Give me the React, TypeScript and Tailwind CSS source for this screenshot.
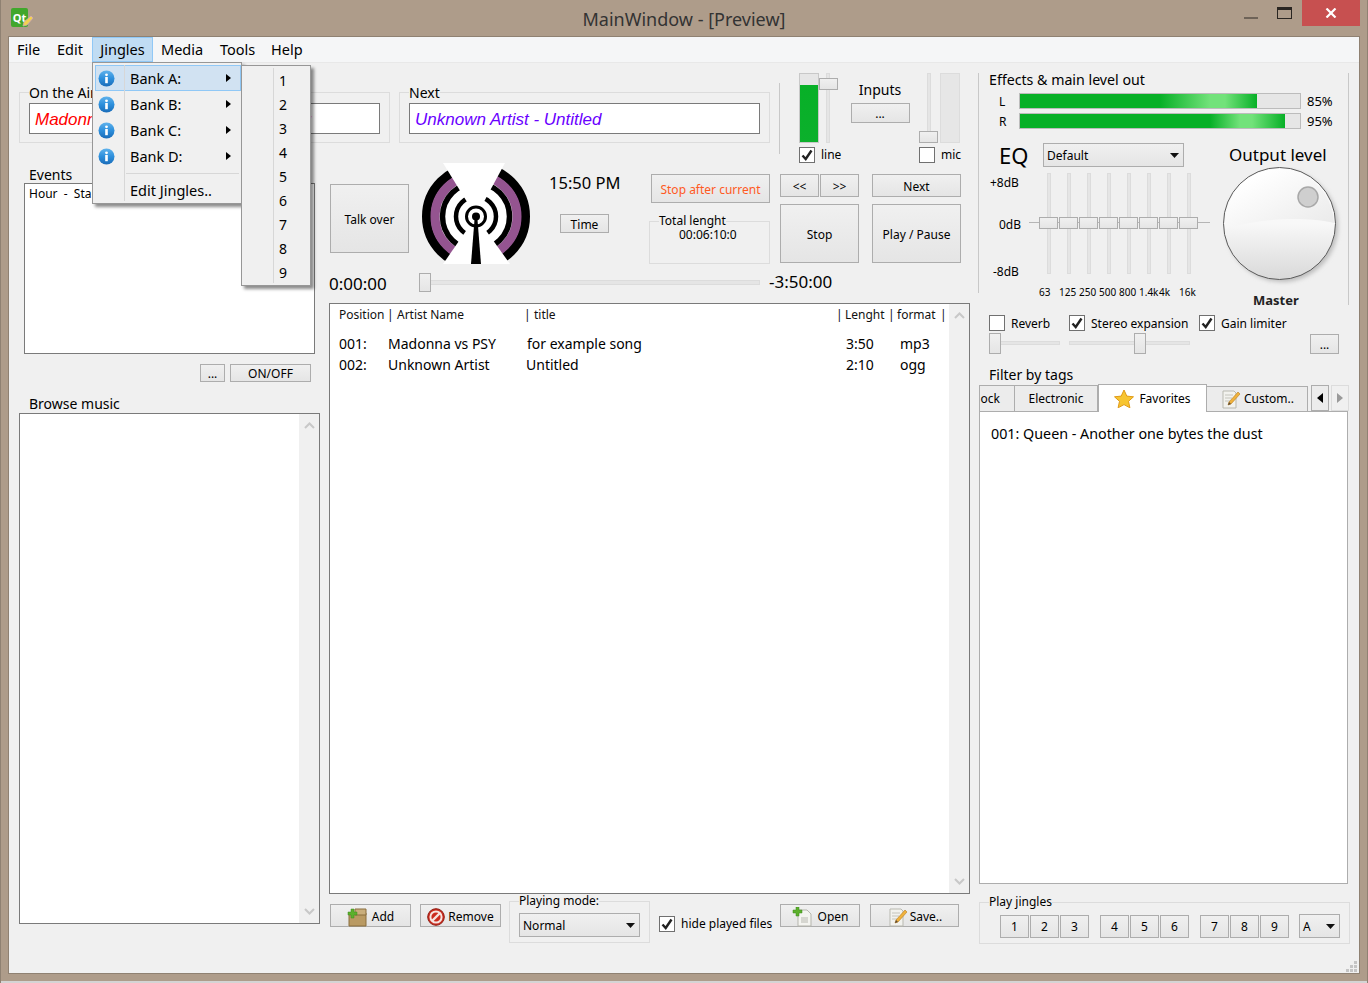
import React from "react";

type P = { className?: string; children?: React.ReactNode };

const Btn = ({ className = "", low = false, children }: P & { low?: boolean }) => (
  <div className={`flex items-center justify-center shrink-0 border border-[#adadad] bg-gradient-to-b from-[#f0f0f0] to-[#e5e5e5] text-[12px] ${low ? "pt-[3px]" : "pt-[1px]"} ${className}`}>
    {children}
  </div>
);

const Group = ({ title, className = "", titleClass = "text-[14px] leading-[16px]", children }: P & { title: string; titleClass?: string }) => (
  <div className={`shrink-0 border border-[#dcdcdc] ${className}`}>
    <div className={`-mt-[8px] ml-[9px] h-[16px] w-fit bg-[#f0f0f0] text-black ${titleClass}`}>{title}</div>
    {children}
  </div>
);

const Arrow = ({ className = "" }: P) => (
  <svg width="9" height="5" viewBox="0 0 9 5" className={`shrink-0 ${className}`}>
    <path d="M0 0h9L4.5 5z" fill="#111" />
  </svg>
);

const Combo = ({ className = "", children }: P) => (
  <div className={`flex items-center justify-between border border-[#adadad] bg-gradient-to-b from-[#f0f0f0] to-[#e5e5e5] pl-[3px] pr-[4px] text-[12px] text-black ${className}`}>
    <span className="pt-[1px]">{children}</span>
    <Arrow />
  </div>
);

const Check = ({ on = false, className = "" }: { on?: boolean; className?: string }) => (
  <div className={`flex h-[16px] w-[16px] shrink-0 items-center justify-center border border-[#707070] bg-white ${className}`}>
    {on && (
      <svg width="12" height="12" viewBox="0 0 12 12">
        <path d="M1.5 6.5 L4.7 10 L10.5 1.5" fill="none" stroke="#222" strokeWidth="2.4" />
      </svg>
    )}
  </div>
);

const InfoIcon = () => (
  <svg width="17" height="17" viewBox="0 0 17 17">
    <defs>
      <linearGradient id="ig" x1="0" y1="0" x2="0" y2="1">
        <stop offset="0" stopColor="#5fb2ec" />
        <stop offset="0.5" stopColor="#2d8fdc" />
        <stop offset="1" stopColor="#1a6cb8" />
      </linearGradient>
    </defs>
    <circle cx="8.5" cy="8.5" r="8" fill="url(#ig)" />
    <circle cx="8.5" cy="4.8" r="1.4" fill="#fff" />
    <rect x="7.2" y="7" width="2.6" height="6.2" fill="#fff" />
  </svg>
);

const PencilNote = () => (
  <svg width="22" height="20" viewBox="0 0 22 20">
    <path d="M3 2h11l2 2v15H3z" fill="#f2f2ee" stroke="#b9b9b0" />
    <path d="M5 6h8M5 9h7M5 12h5" stroke="#c4c4bc" />
    <path d="M8 16l1-3 9-10 2 2-9 10z" fill="#f0b23c" stroke="#b67c20" strokeWidth="0.6" />
    <path d="M8 16l1-3 2 2z" fill="#5a4a3a" />
  </svg>
);

const AddBox = () => (
  <svg width="22" height="20" viewBox="0 0 22 20">
    <path d="M2 6h17v13H2z" fill="#b99a63" stroke="#8a6e3f" />
    <path d="M8 2h11v6H8z" fill="#c9ae7c" stroke="#8a6e3f" />
    <path d="M4 2h3v3h3v3H7v3H4V8H1V5h3z" fill="#5cb02c" stroke="#3f8a1c" strokeWidth="0.5" />
  </svg>
);

const OpenDoc = () => (
  <svg width="22" height="20" viewBox="0 0 22 20">
    <path d="M6 3h9l4 4v12H6z" fill="#f4f4f0" stroke="#b5b5ad" />
    <path d="M9 11h7M9 13h7M9 15h7" stroke="#b8b8b0" />
    <path d="M4 0h3v3h3v3H7v3H4V6H1V3h3z" fill="#5cb02c" stroke="#3f8a1c" strokeWidth="0.5" />
  </svg>
);

const RemoveIcon = () => (
  <svg width="18" height="18" viewBox="0 0 18 18">
    <circle cx="9" cy="9" r="8.3" fill="#cc2b1e" stroke="#8e1c12" />
    <circle cx="9" cy="9" r="5.6" fill="none" stroke="#f6e4e0" strokeWidth="2" />
    <path d="M5 13L13 5" stroke="#f6e4e0" strokeWidth="2.4" />
  </svg>
);

const StarIcon = () => (
  <svg width="20" height="19" viewBox="0 0 20 19">
    <path d="M10 1l2.8 6.1 6.7.7-5 4.5 1.4 6.5L10 15.6 4.1 18.8l1.4-6.5-5-4.5 6.7-.7z" fill="#f7c531" stroke="#e09a18" />
  </svg>
);

const Logo = () => (
  <svg width="110" height="101" viewBox="0 0 110 101" className="shrink-0">
    <circle cx="55" cy="53.5" r="36" fill="#fff" />
    <circle cx="55" cy="53.5" r="49.5" fill="none" stroke="#000" strokeWidth="9" />
    <circle cx="55" cy="53.5" r="41" fill="none" stroke="#945490" strokeWidth="9" />
    <circle cx="55" cy="53.5" r="33.5" fill="none" stroke="#000" strokeWidth="5.5" />
    <circle cx="55" cy="53.5" r="20" fill="none" stroke="#000" strokeWidth="4.5" />
    <path d="M22 0H84L55 53.5z" fill="#fff" />
    <path d="M22 101H89L55 53.5z" fill="#fff" />
    <circle cx="55" cy="53.5" r="9.5" fill="#fff" stroke="#000" strokeWidth="3" />
    <path d="M53.8 53H56.2L60 101H50z" fill="#000" />
    <circle cx="55" cy="53.5" r="4" fill="#000" />
  </svg>
);

const Knob = () => (
  <svg width="120" height="120" viewBox="0 0 120 120" className="shrink-0">
    <defs>
      <linearGradient id="kb" x1="0" y1="0" x2="0" y2="1">
        <stop offset="0" stopColor="#fafafa" />
        <stop offset="0.5" stopColor="#f8f8f8" />
        <stop offset="1" stopColor="#d9d9d9" />
      </linearGradient>
      <linearGradient id="kt" x1="0" y1="0" x2="1" y2="1">
        <stop offset="0.2" stopColor="#ffffff" />
        <stop offset="1" stopColor="#e9e9e9" />
      </linearGradient>
      <filter id="ks" x="-10%" y="-10%" width="120%" height="120%">
        <feGaussianBlur stdDeviation="2" />
      </filter>
    </defs>
    <circle cx="59" cy="59" r="56" fill="#bdbdbd" filter="url(#ks)" />
    <circle cx="56.5" cy="56.5" r="56" fill="url(#kb)" stroke="#5a5a5a" />
    <path d="M2 62 C 2 20, 30 2, 56 2 C 85 2, 110 25, 111 56 C 85 50, 40 50, 2 62z" fill="url(#kt)" />
    <circle cx="85" cy="30" r="10" fill="#cfcfcf" stroke="#a8a8a8" strokeWidth="1.5" />
  </svg>
);

const Groove = ({ className = "" }: P) => <div className={`border border-[#dcdcdc] bg-[#e5e5e5] ${className}`} />;

const Handle = ({ className = "" }: P) => (
  <div className={`absolute border border-[#adadad] bg-gradient-to-b from-[#f0f0f0] to-[#e5e5e5] ${className}`} />
);

const ScrollBar = ({ className = "" }: P) => (
  <div className={`flex shrink-0 flex-col items-center justify-between bg-[#f0f0f0] py-[8px] ${className}`}>
    <svg width="11" height="7" viewBox="0 0 11 7">
      <path d="M1 6L5.5 1.5 10 6" fill="none" stroke="#c8c8c8" strokeWidth="2" />
    </svg>
    <svg width="11" height="7" viewBox="0 0 11 7">
      <path d="M1 1L5.5 5.5 10 1" fill="none" stroke="#c8c8c8" strokeWidth="2" />
    </svg>
  </div>
);

const Meter = ({ label, value, fill }: { label: string; value: string; fill: string }) => (
  <div className="flex h-[16px] items-center text-[12px] text-black">
    <span className="ml-[20px] w-[20px] pt-[1px]">{label}</span>
    <div className="h-[16px] w-[282px] border border-[#bcbcbc] bg-[#e6e6e6]">
      <div className={`h-full ${fill}`} />
    </div>
    <span className="ml-[6px] pt-[1px] text-[13px]">{value}</span>
  </div>
);

const bands = ["63", "125", "250", "500", "800", "1.4k", "4k", "16k"];

export default function App() {
  return (
    <div className="flex h-[983px] w-[1368px] flex-col overflow-hidden border-x border-[#8f8172] bg-[#ae9c8a] font-['Noto_Sans',sans-serif] text-black">
      {/* title bar */}
      <div className="grid h-[36px] shrink-0 grid-cols-[1fr_auto_1fr]">
        <div className="pl-[10px] pt-[8px]">
          <div className="relative flex h-[19px] w-[17px] items-center justify-center rounded-[2px] bg-[#41a72c] text-[11px] font-bold leading-none text-white">
            Qt
            <svg width="12" height="12" viewBox="0 0 12 12" className="absolute -right-[6px] bottom-0">
              <path d="M1 11l1-4 7-6 2 2-6 7z" fill="#f3d24e" stroke="#d2a8b8" strokeWidth="0.8" />
            </svg>
          </div>
        </div>
        <div className="pt-[6px] text-[18px] leading-[26px] text-[#333]">MainWindow - [Preview]</div>
        <div className="flex justify-end pr-[7px]">
          <div className="mr-[19px] mt-[17px] h-[2px] w-[14px] bg-[#6e6358]" />
          <div className="mr-[10px] mt-[7px] h-[12px] w-[15px] border border-t-[3px] border-[#2a2622]" />
          <div className="flex h-[26px] w-[58px] items-center justify-center bg-[#c75050]">
            <svg width="12" height="10" viewBox="0 0 12 10">
              <path d="M1.5 0.5L10.5 9.5M10.5 0.5L1.5 9.5" stroke="#fff" strokeWidth="2.2" />
            </svg>
          </div>
        </div>
      </div>

      {/* window body */}
      <div className="relative ml-[7px] flex h-[938px] w-[1352px] shrink-0 flex-col border border-[#8f8172] bg-[#f0f0f0]">
        <div className="flex h-[26px] shrink-0 items-stretch border-b border-[#e8e8e8] bg-[#f5f6f7] pl-[8px] text-[14.5px]">
          <div className="flex w-[40px] items-center">File</div>
          <div className="flex w-[35px] items-center">Edit</div>
          <div className="flex w-[61px] items-center justify-center border border-[#90c8f6] bg-[#c0dcf3]">Jingles</div>
          <div className="ml-[8px] flex w-[59px] items-center">Media</div>
          <div className="flex w-[51px] items-center">Tools</div>
          <div className="flex items-center">Help</div>
        </div>

        <div className="flex min-h-0 flex-1">
          {/* left and middle */}
          <div className="flex w-[966px] shrink-0 flex-col">
            <div className="flex h-[100px] shrink-0">
              <Group title="On the Air" className="ml-[10px] mt-[29px] h-[51px] w-[371px]">
                <div className="ml-[9px] mt-[2px] flex h-[31px] w-[351px] items-center border border-[#7a7a7a] bg-white pl-[5px] pt-[2px] font-['Liberation_Sans',sans-serif] text-[17px] italic text-[#ff0000]">
                  Madonna vs PSY - for example song
                </div>
              </Group>
              <Group title="Next" className="ml-[9px] mt-[29px] h-[51px] w-[371px]">
                <div className="ml-[9px] mt-[2px] flex h-[31px] w-[351px] items-center border border-[#7a7a7a] bg-white pl-[5px] pt-[2px] font-['Liberation_Sans',sans-serif] text-[17px] italic text-[#6a00ff]">
                  Unknown Artist - Untitled
                </div>
              </Group>
              <div className="ml-[9px] mt-[20px] h-[71px] w-px shrink-0 bg-[#c8c8c8]" />
              {/* inputs */}
              <div className="ml-[19px] mt-[10px] flex h-[90px] flex-col">
                <div className="flex">
                  <div className="h-[70px] w-[20px] border border-[#c8c8c8] bg-[#e6e6e6] pt-[11px]">
                    <div className="h-full bg-gradient-to-b from-[#07b027] to-[#0cb02c]" />
                  </div>
                  <div className="relative ml-[7px] h-[70px] w-[12px]">
                    <Groove className="h-full w-[4px]" />
                    <Handle className="-left-[7px] top-[5px] h-[12px] w-[19px]" />
                  </div>
                  <div className="ml-[7px] flex w-[70px] flex-col items-center pt-[8px]">
                    <div className="text-[14px] leading-[18px]">Inputs</div>
                    <Btn className="mt-[4px] h-[20px] w-[59px]">...</Btn>
                  </div>
                  <div className="relative ml-[12px] h-[70px] w-[13px]">
                    <Groove className="h-full w-[4px]" />
                    <Handle className="-left-[8px] top-[58px] h-[12px] w-[19px]" />
                  </div>
                  <div className="h-[70px] w-[20px] border border-[#dcdcdc] bg-[#e6e6e6]" />
                </div>
                <div className="mt-[3px] flex items-center text-[12px]">
                  <Check on />
                  <span className="ml-[6px] w-[98px]">line</span>
                  <Check />
                  <span className="ml-[6px]">mic</span>
                </div>
              </div>
            </div>

            <div className="flex min-h-0 flex-1">
              {/* left column */}
              <div className="flex w-[316px] shrink-0 flex-col">
                <div className="ml-[20px] mt-[3px] h-[17px] text-[14px] leading-[17px]">Events</div>
                <div className="ml-[15px] h-[171px] w-[291px] border border-[#7a7a7a] bg-white pl-[4px] pt-[2px] text-[12px] leading-[16px]">
                  Hour&nbsp; -&nbsp; Start
                </div>
                <div className="mt-[10px] flex">
                  <Btn className="ml-[191px] h-[18px] w-[25px]">...</Btn>
                  <Btn className="ml-[5px] h-[18px] w-[81px]">ON/OFF</Btn>
                </div>
                <div className="ml-[20px] mt-[13px] h-[18px] text-[14px] leading-[17px]">Browse music</div>
                <div className="ml-[10px] flex h-[511px] w-[301px] justify-end border border-[#7a7a7a] bg-white">
                  <ScrollBar className="w-[20px]" />
                </div>
              </div>

              {/* middle column */}
              <div className="flex w-[650px] shrink-0 flex-col">
                <div className="flex h-[110px] shrink-0">
                  <Btn low className="ml-[5px] mt-[21px] h-[69px] w-[79px]">Talk over</Btn>
                  <div className="ml-[12px]">
                    <Logo />
                  </div>
                  <div className="ml-[18px] w-[99px]">
                    <div className="mt-[9px] text-[16.5px] leading-[22px]">15:50 PM</div>
                    <Btn low className="ml-[11px] mt-[20px] h-[19px] w-[49px]">Time</Btn>
                  </div>
                  <div className="ml-[1px] w-[122px]">
                    <Btn low className="ml-[2px] mt-[11px] h-[29px] w-[119px] text-[#ff5a1f]">Stop after current</Btn>
                    <Group title="Total lenght" className="mt-[18px] h-[43px] w-[121px]" titleClass="text-[12px] leading-[14px]">
                      <div className="ml-[29px] mt-[-2px] text-[12px] leading-[14px]">00:06:10:0</div>
                    </Group>
                  </div>
                  <div className="ml-[9px] w-[79px]">
                    <div className="mt-[11px] flex gap-px">
                      <Btn low className="h-[23px] w-[39px]">&lt;&lt;</Btn>
                      <Btn low className="h-[23px] w-[39px]">&gt;&gt;</Btn>
                    </div>
                    <Btn low className="mt-[7px] h-[59px] w-[79px]">Stop</Btn>
                  </div>
                  <div className="ml-[13px] w-[89px]">
                    <Btn low className="mt-[11px] h-[23px] w-[89px]">Next</Btn>
                    <Btn low className="mt-[7px] h-[59px] w-[89px]">Play / Pause</Btn>
                  </div>
                </div>

                <div className="flex h-[30px] shrink-0 items-start">
                  <div className="ml-[4px] mt-[1px] w-[90px] text-[17px] leading-[20px]">0:00:00</div>
                  <div className="relative h-[19px] w-[341px]">
                    <Groove className="absolute left-0 top-[7px] h-[5px] w-full" />
                    <Handle className="left-0 top-0 h-[19px] w-[12px]" />
                  </div>
                  <div className="ml-[9px] -mt-[1px] text-[17px] leading-[20px]">-3:50:00</div>
                </div>

                <div className="ml-[4px] flex h-[591px] w-[641px] shrink-0 border border-[#7a7a7a] bg-white">
                  <div className="min-w-0 flex-1 pl-[9px] pt-[2px]">
                    <div className="grid h-[18px] grid-cols-[48px_10px_127px_10px_302px_9px_43px_9px_43px_8px] items-center text-[12px] text-[#111]">
                      <span>Position</span><span>|</span><span>Artist Name</span><span>|</span><span>title</span>
                      <span>|</span><span>Lenght</span><span>|</span><span>format</span><span>|</span>
                    </div>
                    <div className="mt-[9px] grid grid-cols-[49px_139px_319px_54px_auto] text-[14px] leading-[21px]">
                      <span>001:</span><span>Madonna vs PSY</span><span>for example song</span><span>3:50</span><span>mp3</span>
                      <span>002:</span><span>Unknown Artist</span><span className="-ml-[1px]">Untitled</span><span>2:10</span><span>ogg</span>
                    </div>
                  </div>
                  <ScrollBar className="w-[20px]" />
                </div>

                <div className="flex items-start">
                  <Btn low className="ml-[5px] mt-[10px] h-[23px] w-[81px] gap-[3px]"><AddBox />Add</Btn>
                  <Btn low className="ml-[9px] mt-[10px] h-[23px] w-[81px] gap-[3px]"><RemoveIcon />Remove</Btn>
                  <Group title="Playing mode:" className="ml-[8px] mt-[7px] h-[42px] w-[141px]" titleClass="text-[12px] leading-[14px]">
                    <Combo className="ml-[9px] mt-[3px] h-[24px] w-[121px]">Normal</Combo>
                  </Group>
                  <Check on className="ml-[9px] mt-[22px]" />
                  <span className="ml-[6px] mt-[21px] w-[99px] text-[12px] leading-[18px]">hide played files</span>
                  <Btn low className="mt-[10px] h-[23px] w-[80px] gap-[4px]"><OpenDoc />Open</Btn>
                  <Btn low className="ml-[10px] mt-[10px] h-[23px] w-[89px] gap-[1px]"><PencilNote />Save..</Btn>
                </div>
              </div>
            </div>
          </div>

          {/* right column */}
          <div className="flex w-[384px] shrink-0 flex-col">
            <div className="ml-[3px] mt-[10px] h-[232px] w-[371px] shrink-0 border-r border-[#c8c8c8]">
              <div className="h-[220px] border-l border-[#c8c8c8]">
                <div className="ml-[10px] h-[14px] text-[14.2px] leading-[14px]">Effects &amp; main level out</div>
                <div className="mt-[6px] flex flex-col gap-[4px]">
                  <Meter label="L" value="85%" fill="w-[237px] bg-[linear-gradient(90deg,#07b027_0,#07b027_140px,#72e27a_190px,#72e27a_205px,#07b027_237px)]" />
                  <Meter label="R" value="95%" fill="w-[265px] bg-[linear-gradient(90deg,#07b027_0,#07b027_190px,#72e27a_220px,#72e27a_232px,#07b027_265px)]" />
                </div>
                <div className="mt-[14px] flex">
                  <div className="w-[244px]">
                    <div className="flex h-[24px] items-center">
                      <span className="ml-[20px] w-[44px] text-[22px] leading-[24px]">EQ</span>
                      <Combo className="h-[24px] w-[141px]">Default</Combo>
                    </div>
                    <div className="mt-[6px] flex">
                      <div className="relative h-[101px] w-[50px] text-[12px]">
                        <span className="absolute left-[11px] top-[1px]">+8dB</span>
                        <span className="absolute left-[20px] top-[43px]">0dB</span>
                        <span className="absolute left-[14px] top-[90px]">-8dB</span>
                      </div>
                      <div className="relative flex h-[101px] w-[181px] pl-[18px]">
                        <div className="absolute left-0 right-0 top-[49px] h-px bg-[#b5b5b5]" />
                        {bands.map((b) => (
                          <div key={b} className="relative h-full w-[20px]">
                            <Groove className="h-full w-[4px]" />
                            <Handle className="-left-[8px] top-[44px] h-[12px] w-[19px]" />
                          </div>
                        ))}
                      </div>
                    </div>
                    <div className="ml-[60px] mt-[12px] flex text-[10px] leading-[12px]">
                      {bands.map((b) => (
                        <span key={b} className="w-[20px] whitespace-nowrap">{b}</span>
                      ))}
                    </div>
                  </div>
                  <div className="flex w-[120px] flex-col">
                    <div className="ml-[6px] h-[24px] text-[17px] leading-[24px]">Output level</div>
                    <Knob />
                    <div className="mt-[5px] ml-[30px] text-[13px] font-bold leading-[16px] text-[#222]">Master</div>
                  </div>
                </div>
              </div>
            </div>

            <div className="mt-[10px] flex h-[16px] shrink-0 items-center text-[12px]">
              <Check className="ml-[14px]" />
              <span className="ml-[6px] w-[58px] pt-[2px]">Reverb</span>
              <Check on />
              <span className="ml-[6px] w-[108px] pt-[2px]">Stereo expansion</span>
              <Check on />
              <span className="ml-[6px] pt-[2px]">Gain limiter</span>
            </div>
            <div className="mt-[2px] flex h-[21px] shrink-0">
              <div className="relative ml-[14px] h-[21px] w-[71px]">
                <Groove className="absolute left-0 right-0 top-[8px] h-[4px]" />
                <Handle className="left-0 top-0 h-[21px] w-[12px]" />
              </div>
              <div className="relative ml-[9px] h-[21px] w-[121px]">
                <Groove className="absolute left-0 right-0 top-[8px] h-[4px]" />
                <Handle className="left-[65px] top-0 h-[21px] w-[12px]" />
              </div>
              <Btn className="ml-[120px] mt-[1px] h-[20px] w-[29px]">...</Btn>
            </div>
            <div className="ml-[14px] mt-[12px] h-[18px] shrink-0 text-[14px] leading-[17px]">Filter by tags</div>

            <div className="ml-[4px] flex h-[28px] w-[370px] shrink-0 items-end text-[12px]">
              <div className="flex h-[27px] w-[36px] items-center justify-end border border-[#adadad] bg-[#ececec] pr-[14px]">ock</div>
              <div className="flex h-[27px] w-[83px] items-center justify-center border border-l-0 border-[#adadad] bg-[#ececec]">Electronic</div>
              <div className="z-10 flex h-[28px] w-[109px] items-center justify-center gap-[5px] border border-b-0 border-[#adadad] bg-white"><StarIcon />Favorites</div>
              <div className="flex h-[26px] w-[101px] items-center justify-center gap-[2px] border border-l-0 border-[#adadad] bg-[#ececec]"><PencilNote />Custom..</div>
              <div className="mb-[1px] ml-[3px] flex h-[26px] w-[18px] items-center justify-center border border-[#adadad] bg-[#ececec]">
                <svg width="6" height="10" viewBox="0 0 6 10"><path d="M6 0v10L0 5z" fill="#000" /></svg>
              </div>
              <div className="mb-[1px] ml-[2px] flex h-[26px] w-[18px] items-center justify-center border border-[#dcdcdc] bg-[#f0f0f0]">
                <svg width="6" height="10" viewBox="0 0 6 10"><path d="M0 0v10l6-5z" fill="#9a9a9a" /></svg>
              </div>
            </div>
            <div className="-mt-px ml-[4px] h-[473px] w-[369px] shrink-0 border border-[#adadad] bg-white pl-[11px] pt-[12px] text-[14.3px] leading-[20px]">
              001: Queen - Another one bytes the dust
            </div>

            <Group title="Play jingles" className="ml-[4px] mt-[18px] h-[42px] w-[371px]" titleClass="text-[12px] leading-[14px]">
              <div className="ml-[20px] mt-[4px] flex">
                {[["1", "2", "3"], ["4", "5", "6"], ["7", "8", "9"]].map((set) => (
                  <div key={set[0]} className="mr-[11px] flex gap-px">
                    {set.map((n) => (
                      <Btn key={n} className="h-[23px] w-[29px]">{n}</Btn>
                    ))}
                  </div>
                ))}
                <Combo className="-mt-px h-[24px] w-[41px] -ml-[1px]">A</Combo>
              </div>
            </Group>
            <div className="ml-auto mr-[2px] mt-[17px] grid h-[11px] w-[11px] grid-cols-3 gap-px">
              <i /><i /><i className="bg-[#c4c4c4]" />
              <i /><i className="bg-[#c4c4c4]" /><i className="bg-[#c4c4c4]" />
              <i className="bg-[#c4c4c4]" /><i className="bg-[#c4c4c4]" /><i className="bg-[#c4c4c4]" />
            </div>
          </div>
        </div>

        {/* open Jingles menu */}
        <div className="absolute left-[83px] top-[25px] z-20 h-[142px] w-[150px] border border-[#979797] bg-[#f0f0f0] p-[2px] text-[14.5px] shadow-[3px_3px_3px_rgba(0,0,0,0.45)]">
          <div className="flex h-[26px] w-[146px] items-center border border-[#90c8f6] bg-[#d1e2f2]">
            <div className="flex w-[21px] justify-center"><InfoIcon /></div>
            <span className="ml-[13px] flex-1 pt-[2px]">Bank A:</span>
            <svg width="5" height="8" viewBox="0 0 5 8" className="mr-[9px]"><path d="M0 0v8l5-4z" fill="#000" /></svg>
          </div>
          {["Bank B:", "Bank C:", "Bank D:"].map((b) => (
            <div key={b} className="flex h-[26px] w-[146px] items-center px-px">
              <div className="flex w-[21px] justify-center"><InfoIcon /></div>
              <span className="ml-[13px] flex-1 pt-[2px]">{b}</span>
              <svg width="5" height="8" viewBox="0 0 5 8" className="mr-[9px]"><path d="M0 0v8l5-4z" fill="#000" /></svg>
            </div>
          ))}
          <div className="ml-[31px] mt-[4px] h-px bg-[#d7d7d7]" />
          <div className="ml-[35px] flex h-[32px] items-center pt-[2px]">Edit Jingles..</div>
          <div className="absolute left-[31px] top-[2px] h-[136px] w-px bg-[#d7d7d7]" />
        </div>
        <div className="absolute left-[232px] top-[28px] z-30 flex h-[221px] w-[70px] flex-col border border-[#979797] bg-[#f0f0f0] pl-[37px] pt-[2px] text-[14px] shadow-[3px_3px_3px_rgba(0,0,0,0.45)]">
          {["1", "2", "3", "4", "5", "6", "7", "8", "9"].map((n) => (
            <div key={n} className="flex h-[24px] items-center">{n}</div>
          ))}
          <div className="absolute left-[31px] top-[2px] h-[215px] w-px bg-[#d7d7d7]" />
        </div>
      </div>
      <div className="min-h-0 flex-1" />
      <div className="h-[2px] shrink-0 bg-[#d4d4d4]" />
    </div>
  );
}
